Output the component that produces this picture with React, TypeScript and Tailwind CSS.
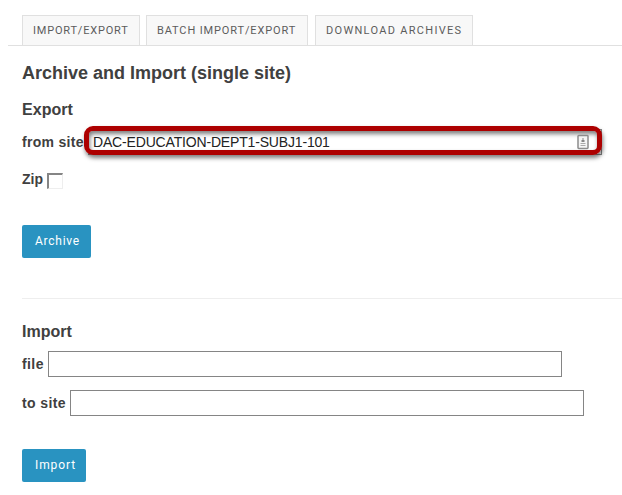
import type { ReactNode } from "react";

function Tab({ label, size }: { label: string; size: string }) {
  return (
    <a className={`box-border h-[30px] shrink-0 whitespace-nowrap border border-b-0 border-[#e0e0e0] bg-[#f8f8f8] pl-[10px] pt-[6px] font-[Roboto,sans-serif] text-[11px] leading-[17px] text-[#5c5c5c] ${size}`}>
      {label}
    </a>
  );
}

function Row({ label, className, children }: { label: string; className: string; children: ReactNode }) {
  return (
    <div className={`flex h-[26px] items-center ${className}`}>
      <label className="shrink-0 whitespace-nowrap text-[14px] font-bold leading-[18px]">{label}</label>
      {children}
    </div>
  );
}

export default function App() {
  return (
    <div className="h-[495px] w-[622px] overflow-hidden bg-white pl-[8px] pt-[15px] font-['Liberation_Sans',Arial,sans-serif] text-[#404040]">
      <nav className="flex h-[31px] border-b border-[#e0e0e0] pl-[14px]">
        <Tab label="IMPORT/EXPORT" size="w-[118px] mr-[6px] tracking-[0.8px]" />
        <Tab label="BATCH IMPORT/EXPORT" size="w-[162px] mr-[7px] tracking-[0.87px]" />
        <Tab label="DOWNLOAD ARCHIVES" size="w-[158px] tracking-[1.3px]" />
      </nav>
      <main className="pl-[14px]">
        <h1 className="mt-[16px] h-[22px] text-[18px] font-bold leading-[22px]">Archive and Import (single site)</h1>
        <h2 className="mt-[16px] h-[20px] text-[16px] font-bold leading-[20px] tracking-[0.05px]">Export</h2>
        <Row label="from site" className="mt-[9px] tracking-[0.3px]">
          <div className="relative ml-auto mr-[20px] flex h-[26px] w-[514px] items-center border border-[#888] bg-white pl-[4px]">
            <span className="text-[14px] leading-[18px] tracking-[-0.17px] text-[#222]">DAC-EDUCATION-DEPT1-SUBJ1-101</span>
            <div className="absolute -left-[5px] -top-[4px] h-[29px] w-[518px] rounded-[9px] border-[5px] border-[#ad0000] shadow-[1px_3px_4px_rgba(0,0,0,0.5),inset_1px_3px_4px_rgba(0,0,0,0.5)]" />
            <svg className="absolute left-[488px] top-[4px]" width="12" height="16" viewBox="0 0 12 16">
              <rect x="1" y="1.5" width="10" height="13" rx=".7" fill="#f5f5f5" stroke="#8c8c8c" strokeWidth="1.5" />
              <path d="M5.5 4h1v2h1v2h-3V6h1z" fill="#888" />
              <path d="M3.5 9.5h5M3.5 11.5h5" stroke="#aaa" />
            </svg>
          </div>
        </Row>
        <Row label="Zip" className="mt-[11px]">
          <span className="ml-[4px] mt-[4px] size-[16px] border-b border-l-2 border-r border-t-2 border-b-[#eee] border-l-[#858585] border-r-[#eee] border-t-[#858585] bg-white" />
        </Row>
        <button className="mt-[33px] flex h-[33px] w-[69px] rounded-[2px] bg-[#2993c1] pl-[13px] font-[Roboto,sans-serif] text-[12px] leading-[32px] tracking-[0.75px] text-white">Archive</button>
        <hr className="mt-[40px] border-t border-[#eee]" />
        <h2 className="mt-[23px] h-[20px] text-[16px] font-bold leading-[20px]">Import</h2>
        <Row label="file" className="mt-[9px] tracking-[0.4px]">
          <input className="ml-auto mr-[60px] h-[26px] w-[514px] border border-[#858585] bg-white" />
        </Row>
        <Row label="to site" className="mt-[13px] tracking-[0.4px]">
          <input className="ml-auto mr-[38px] h-[26px] w-[514px] border border-[#858585] bg-white" />
        </Row>
        <button className="mt-[33px] flex h-[33px] w-[64px] rounded-[2px] bg-[#2993c1] pl-[13px] font-[Roboto,sans-serif] text-[12px] leading-[32px] tracking-[0.9px] text-white">Import</button>
      </main>
    </div>
  );
}
